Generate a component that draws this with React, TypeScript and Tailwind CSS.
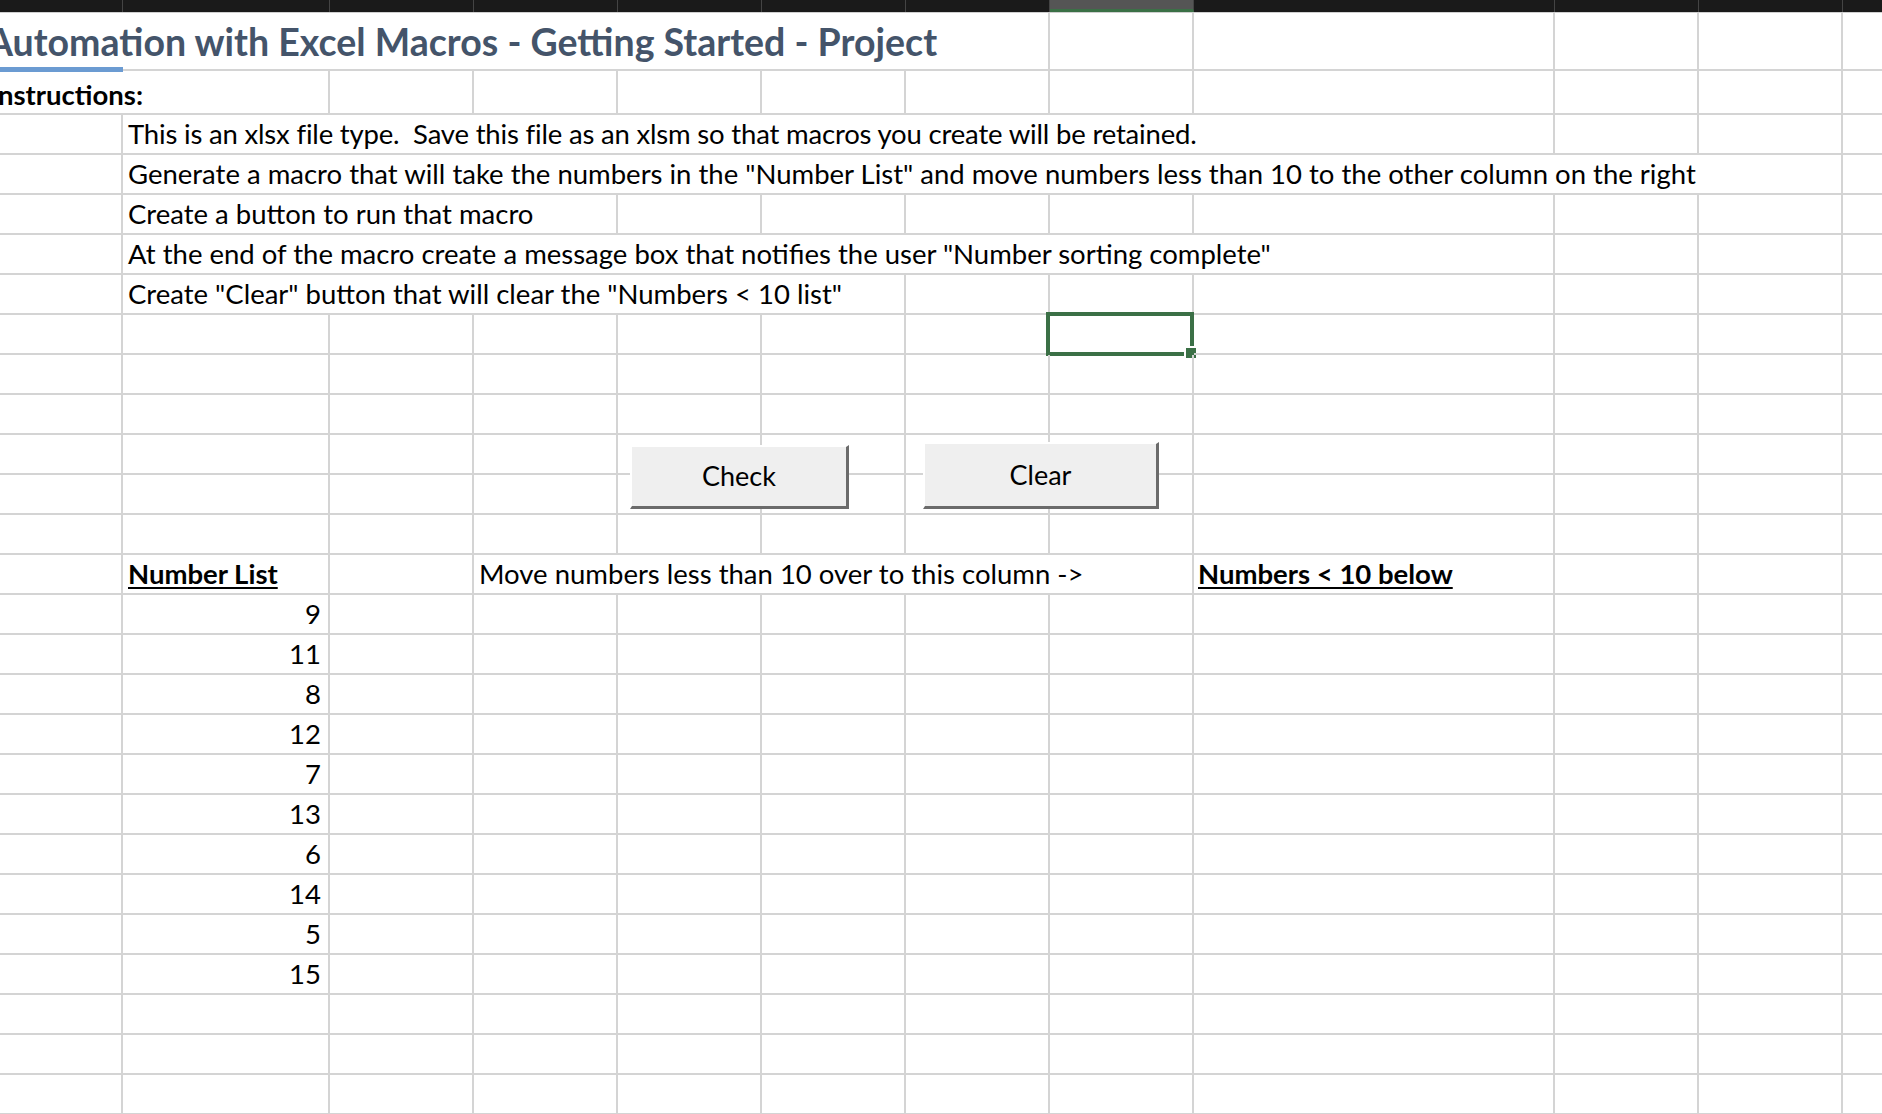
import type { ReactNode } from 'react'

const colWidths = [
  'w-[123px]',
  'w-[207px]',
  'w-[144px]',
  'w-[144px]',
  'w-[144px]',
  'w-[144px]',
  'w-[144px]',
  'w-[144px]',
  'w-[361px]',
  'w-[144px]',
  'w-[144px]',
  'w-[120px]',
]

type Row = {
  h: string
  hide?: number[]
  cells?: Record<number, ReactNode>
  selected?: number
}

const numbers = [9, 11, 8, 12, 7, 13, 6, 14, 5, 15]

const instructions = [
  {
    text: 'This is an xlsx file type.  Save this file as an xlsm so that macros you create will be retained.',
    hide: [1, 2, 3, 4, 5, 6, 7],
    tight: true,
  },
  { text: 'Generate a macro that will take the numbers in the "Number List" and move numbers less than 10 to the other column on the right', hide: [1, 2, 3, 4, 5, 6, 7, 8, 9] },
  { text: 'Create a button to run that macro', hide: [1, 2] },
  { text: 'At the end of the macro create a message box that notifies the user "Number sorting complete"', hide: [1, 2, 3, 4, 5, 6, 7] },
  { text: 'Create "Clear" button that will clear the "Numbers < 10 list"', hide: [1, 2, 3, 4] },
]

const rows: Row[] = [
  {
    h: 'h-[58px]',
    hide: [0, 1, 2, 3, 4, 5],
    cells: {
      0: (
        <>
          <span className="-ml-[13px] mt-[2px] whitespace-nowrap text-[37.5px] font-bold text-[#44546a]">
            Automation with Excel Macros - Getting Started - Project
          </span>
          <div className="absolute -bottom-[3px] left-0 right-0 h-[5px] bg-[#6b9bd2]" />
        </>
      ),
    },
  },
  {
    h: 'h-[44px]',
    hide: [0],
    cells: {
      0: <span className="-ml-[10px] mt-[5px] whitespace-nowrap font-bold">Instructions:</span>,
    },
  },
  ...instructions.map((item) => ({
    h: 'h-[40px]',
    hide: item.hide,
    cells: {
      1: (
        <span className={`whitespace-pre pl-[5px] ${item.tight ? 'tracking-[-0.18px]' : ''}`}>
          {item.text}
        </span>
      ),
    },
  })),
  { h: 'h-[40px]', selected: 7 },
  { h: 'h-[40px]' },
  { h: 'h-[40px]' },
  { h: 'h-[40px]' },
  { h: 'h-[40px]' },
  { h: 'h-[40px]' },
  {
    h: 'h-[40px]',
    hide: [3, 4, 5, 6],
    cells: {
      1: <span className="whitespace-nowrap pl-[5px] font-bold underline decoration-2 underline-offset-[3px]">Number List</span>,
      3: <span className="whitespace-nowrap pl-[5px]">Move numbers less than 10 over to this column -&gt;</span>,
      8: <span className="whitespace-nowrap pl-[4px] font-bold underline decoration-2 underline-offset-[3px]">Numbers &lt; 10 below</span>,
    },
  },
  ...numbers.map((n) => ({
    h: 'h-[40px]',
    cells: { 1: <span className="ml-auto pr-[7px]">{n}</span> },
  })),
  { h: 'h-[40px]' },
  { h: 'h-[40px]' },
  { h: 'h-[40px]' },
]

function SheetRow({ row }: { row: Row }) {
  return (
    <div className={`flex ${row.h}`}>
      {colWidths.map((w, i) => {
        const hidden = row.hide?.includes(i)
        return (
          <div
            key={i}
            className={`relative flex h-full shrink-0 items-center border-b-2 border-[#d4d4d4] ${w} ${
              hidden ? 'border-r-0' : 'border-r-2'
            }`}
          >
            {row.cells?.[i]}
            {row.selected === i && (
              <>
                <div className="absolute -bottom-[3px] -left-[4px] -right-[2px] -top-[3px] border-[4px] border-[#3b7046]" />
                <div className="absolute -bottom-[7px] -right-[6px] h-[14px] w-[14px] border-2 border-white bg-[#3b7046]" />
              </>
            )}
          </div>
        )
      })}
    </div>
  )
}

function MacroButton({ label, className }: { label: string; className: string }) {
  return (
    <div
      className={`absolute flex items-center justify-center border-b-[3px] border-l-2 border-r-[3px] border-t-2 border-b-[#6b6b6b] border-l-white border-r-[#6b6b6b] border-t-white bg-[#efefef] text-[27px] text-black ${className}`}
    >
      {label}
    </div>
  )
}

export default function App() {
  return (
    <div className="relative h-[1114px] w-[1882px] overflow-hidden bg-white font-[Lato,sans-serif] text-[27.5px] text-black">
      {/* column header strip */}
      <div className="flex h-[13px] border-b border-[#cfcfcf]">
        {colWidths.map((w, i) => (
          <div
            key={i}
            className={`h-full shrink-0 border-r border-[#444] ${w} ${
              i === 7 ? 'border-b-[3px] border-b-[#3b7046] bg-[#555]' : 'bg-[#1a1a1a]'
            }`}
          />
        ))}
      </div>

      {rows.map((row, i) => (
        <SheetRow key={i} row={row} />
      ))}

      <MacroButton label="Check" className="left-[630px] top-[445px] h-[64px] w-[219px]" />
      <MacroButton label="Clear" className="left-[923px] top-[442px] h-[67px] w-[236px]" />
    </div>
  )
}
